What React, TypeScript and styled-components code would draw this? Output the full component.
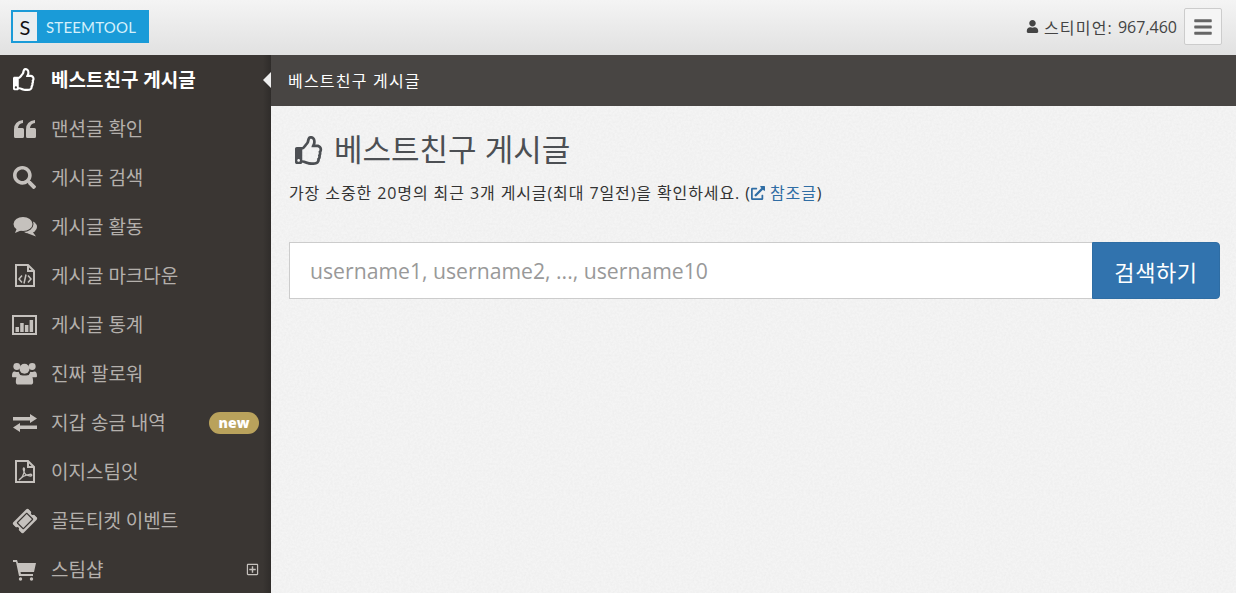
import React from "react";
import styled, { createGlobalStyle } from "styled-components";
import {
  FaBars,
  FaExternalLinkAlt,
  FaRegPlusSquare,
  FaRegThumbsUp,
  FaSearch,
  FaTicketAlt,
  FaUser,
} from "react-icons/fa";

const noise =
  "data:image/svg+xml,%3Csvg xmlns='http://www.w3.org/2000/svg' width='240' height='240'%3E%3Cfilter id='n'%3E%3CfeTurbulence type='fractalNoise' baseFrequency='0.45' numOctaves='2' stitchTiles='stitch'/%3E%3CfeColorMatrix values='0 0 0 0 0.45 0 0 0 0 0.45 0 0 0 0 0.45 0.18 0 0 0 -0.06'/%3E%3C/filter%3E%3Crect width='240' height='240' filter='url(%23n)'/%3E%3C/svg%3E";

const GlobalStyle = createGlobalStyle`
  html, body {
    margin: 0;
    padding: 0;
    height: 100%;
    overflow: hidden;
  }
  body {
    font-family: "Open Sans", "Noto Sans CJK KR", sans-serif;
    background: #f2f2f2;
  }
  * {
    box-sizing: border-box;
  }
`;

const Page = styled.div`
  display: flex;
  flex-direction: column;
  height: 593px;
  overflow: hidden;
`;

const Header = styled.header`
  display: flex;
  align-items: center;
  justify-content: space-between;
  flex: 0 0 55px;
  padding: 0 14px 2px 11px;
  background: linear-gradient(to bottom, #f4f4f4, #e1e1e1);
`;

const Logo = styled.div`
  display: flex;
  align-items: center;
  width: 138px;
  height: 33px;
  padding: 2px;
  background: #1a9bd8;
`;

const LogoMark = styled.span`
  display: flex;
  align-items: center;
  justify-content: center;
  width: 24px;
  height: 29px;
  margin-right: 9px;
  background: #e9eef0;
  color: #111;
  font-family: "Lato", sans-serif;
  font-size: 20px;
`;

const LogoText = styled.span`
  color: #d4f0fb;
  font-family: "Lato", sans-serif;
  font-size: 15px;
  letter-spacing: 0.2px;
`;

const HeaderRight = styled.div`
  display: flex;
  align-items: center;
`;

const Points = styled.span`
  display: flex;
  align-items: center;
  gap: 5px;
  margin-right: 7px;
  color: #444;
  font-size: 16px;
`;

const PointsLabel = styled.span`
  letter-spacing: 1.2px;
`;

const MenuButton = styled.button`
  display: flex;
  align-items: center;
  justify-content: center;
  width: 38px;
  height: 37px;
  padding: 0;
  border: 1px solid #ccc;
  border-radius: 2px;
  background: #f5f5f5;
  color: #666;
  font-size: 20px;
`;

const Body = styled.div`
  display: flex;
  flex: 1;
  min-height: 0;
`;

const Sidebar = styled.nav`
  flex: 0 0 271px;
  background: linear-gradient(to right, #3a3633 97%, #2f2c2a);
`;

const MenuItem = styled.a<{ $active?: boolean }>`
  position: relative;
  display: flex;
  align-items: center;
  height: 49px;
  padding: 0 12px;
  color: ${(p) => (p.$active ? "#fff" : "#b4b0ac")};
  font-size: 19px;
  font-weight: ${(p) => (p.$active ? 700 : 400)};
`;

const MenuIcon = styled.span<{ $active?: boolean }>`
  display: flex;
  justify-content: center;
  flex: 0 0 25px;
  margin-right: 14px;
  color: ${(p) => (p.$active ? "#fff" : "#c5c1bd")};
  font-size: 23px;
`;

const MenuLabel = styled.span`
  flex: 1;
  padding-bottom: 2px;
`;

const Tilted = styled.span`
  display: flex;
  font-size: 22px;
  transform: rotate(-45deg);
`;

const NewBadge = styled.span`
  display: flex;
  align-items: center;
  justify-content: center;
  width: 50px;
  height: 22px;
  border-radius: 11px;
  background: #b9a25c;
  color: #fff;
  font-size: 14px;
  font-weight: 800;
`;

const Expand = styled.span`
  display: flex;
  color: #c5c1bd;
  font-size: 13px;
`;

const ActiveArrow = styled.span`
  position: absolute;
  right: 0;
  top: 17px;
  width: 0;
  height: 0;
  border-style: solid;
  border-width: 8px 8px 8px 0;
  border-color: transparent #eee transparent transparent;
`;

const Main = styled.main`
  flex: 1;
  min-width: 0;
  background: #f4f4f4 url("${noise}");
`;

const Crumbs = styled.div`
  display: flex;
  align-items: center;
  height: 51px;
  padding: 0 0 2px 17px;
  background: #484543;
  color: #fff;
  font-size: 16px;
  letter-spacing: 1.2px;
`;

const Content = styled.section`
  padding: 24px 16px 0 18px;
`;

const Title = styled.h1`
  display: flex;
  align-items: center;
  gap: 10px;
  height: 40px;
  margin: 0 0 12px;
  padding-left: 6px;
  color: #4c4f53;
  font-size: 31px;
  font-weight: 400;
  line-height: 40px;
`;

const TitleText = styled.span`
  padding-bottom: 2px;
`;

const Subtitle = styled.p`
  margin: 0 0 38px;
  color: #333;
  font-size: 16px;
  letter-spacing: 0.9px;
  line-height: 22px;
`;

const Reference = styled.a`
  color: #2f6da4;
  svg {
    font-size: 14px;
    vertical-align: -1px;
  }
`;

const SearchRow = styled.form`
  display: flex;
  height: 57px;
`;

const SearchInput = styled.input`
  flex: 1;
  min-width: 0;
  padding: 0 20px;
  border: 1px solid #ccc;
  border-right: 0;
  background: #fff;
  font-family: inherit;
  font-size: 21.2px;
  &::placeholder {
    color: #999;
    opacity: 1;
  }
`;

const SearchButton = styled.button`
  flex: 0 0 128px;
  border: 1px solid #2e6da4;
  border-radius: 0 4px 4px 0;
  background: #3173ae;
  color: #fff;
  font-family: inherit;
  font-size: 22px;
  letter-spacing: 0.6px;
`;

const quoteMark =
  "M0 9.5Q0 1 9 0V3Q4.5 3.500 4 8H8.500A1.500 1.500 0 0 1 10 9.500V16.500A1.500 1.500 0 0 1 8.500 18H1.500A1.500 1.500 0 0 1 0 16.500Z";

const QuoteIcon = () => (
  <svg width="22" height="18" viewBox="0 0 22 18" fill="currentColor">
    <path d={quoteMark} />
    <path d={quoteMark} transform="translate(12 0)" />
  </svg>
);

const CommentsIcon = () => (
  <svg width="24" height="20" viewBox="0 0 24 20" fill="currentColor">
    <ellipse cx="16" cy="10" rx="8" ry="6.500" />
    <path d="M19 14l4 5.500-8-3z" />
    <ellipse cx="10" cy="7" rx="10.500" ry="8" fill="#3a3633" />
    <ellipse cx="10" cy="7" rx="9.500" ry="7" />
    <path d="M4 11l-2 5 7-3z" />
  </svg>
);

const FileOutline = () => (
  <>
    <path d="M1 1h12l6 6v15H1z" />
    <path d="M13 1v6h6" />
  </>
);

const FileCodeIcon = () => (
  <svg width="20" height="23" viewBox="0 0 20 23" fill="none" stroke="currentColor" strokeWidth="2">
    <FileOutline />
    <path d="M7 11.500l-3 3.500 3 3.500M13 11.500l3 3.500-3 3.500M11 10.500l-2 9" strokeWidth="1.500" />
  </svg>
);

const FilePdfIcon = () => (
  <svg width="20" height="23" viewBox="0 0 20 23" fill="none" stroke="currentColor" strokeWidth="2">
    <FileOutline />
    <path
      d="M4 20c3-2 5-6 5.500-10.500 0-2-1.500-2-1.200 0 .7 4.500 3.500 6.500 7.200 6.500 2 0 1.500-2-.7-1.700-4 .5-8 2.200-10.800 5.700z"
      strokeWidth="1.300"
    />
  </svg>
);

const ChartIcon = () => (
  <svg width="25" height="20" viewBox="0 0 25 20" fill="currentColor">
    <rect x="1" y="1" width="23" height="18" fill="none" stroke="currentColor" strokeWidth="2" />
    <rect x="3.500" y="12" width="3.500" height="5" />
    <rect x="8.200" y="8" width="3.500" height="9" />
    <rect x="12.900" y="10" width="3.500" height="7" />
    <rect x="17.600" y="5" width="3.500" height="12" />
  </svg>
);

const UsersIcon = () => (
  <svg width="25" height="23" viewBox="0 0 26 23" fill="currentColor">
    <circle cx="5" cy="4.200" r="3.600" />
    <circle cx="21" cy="4.200" r="3.600" />
    <circle cx="13" cy="6.500" r="5.200" />
    <path d="M0 14c0-3 1-5 3-4.500 1.500.6 3 .7 4 .3.500 2 1 2.500 1.500 3-1.500.6-2.500 1.500-3 2.500H1.500C.5 15.500 0 15 0 14z" />
    <path d="M26 14c0-3-1-5-3-4.500-1.500.6-3 .7-4 .3-.5 2-1 2.500-1.500 3 1.500.6 2.500 1.500 3 2.500h4c1 0 1.500-.5 1.500-1.300z" />
    <path d="M7.500 12.500c2 1.500 9 1.500 11 0 2.500.2 3.500 4 3.500 8 0 1.500-1 2.500-2.500 2.500h-13C5 23 4 22 4 20.500c0-4 1-7.800 3.500-8z" />
  </svg>
);

const ExchangeIcon = () => (
  <svg width="24" height="18" viewBox="0 0 24 18" fill="currentColor">
    <path d="M0 3h17V0l7 4.500L17 9V6.500H0z" />
    <path d="M24 11.500H7V9l-7 4.500L7 18v-3h17z" />
  </svg>
);

const CartIcon = () => (
  <svg width="23" height="22" viewBox="0 0 23 22" fill="currentColor">
    <path d="M0 1h4l1 3h18l-2 9H7.500l.4 2H20v2H6L3 3H0z" />
    <circle cx="7.500" cy="20" r="1.700" />
    <circle cx="18.500" cy="20" r="1.700" />
  </svg>
);

const menu = [
  { label: "베스트친구 게시글", icon: <FaRegThumbsUp />, active: true },
  { label: "맨션글 확인", icon: <QuoteIcon /> },
  { label: "게시글 검색", icon: <FaSearch /> },
  { label: "게시글 활동", icon: <CommentsIcon /> },
  { label: "게시글 마크다운", icon: <FileCodeIcon /> },
  { label: "게시글 통계", icon: <ChartIcon /> },
  { label: "진짜 팔로워", icon: <UsersIcon /> },
  { label: "지갑 송금 내역", icon: <ExchangeIcon />, badge: true },
  { label: "이지스팀잇", icon: <FilePdfIcon /> },
  {
    label: "골든티켓 이벤트",
    icon: (
      <Tilted>
        <FaTicketAlt />
      </Tilted>
    ),
  },
  { label: "스팀샵", icon: <CartIcon />, expand: true },
];

const App: React.FC = () => {
  return (
    <Page>
      <GlobalStyle />
      <Header>
        <Logo>
          <LogoMark>S</LogoMark>
          <LogoText>STEEMTOOL</LogoText>
        </Logo>
        <HeaderRight>
          <Points>
            <FaUser size={13} />
            <PointsLabel>스티미언:</PointsLabel>
            967,460
          </Points>
          <MenuButton type="button">
            <FaBars />
          </MenuButton>
        </HeaderRight>
      </Header>
      <Body>
        <Sidebar>
          {menu.map((item) => (
            <MenuItem key={item.label} $active={item.active}>
              <MenuIcon $active={item.active}>{item.icon}</MenuIcon>
              <MenuLabel>{item.label}</MenuLabel>
              {item.badge && <NewBadge>new</NewBadge>}
              {item.expand && (
                <Expand>
                  <FaRegPlusSquare />
                </Expand>
              )}
              {item.active && <ActiveArrow />}
            </MenuItem>
          ))}
        </Sidebar>
        <Main>
          <Crumbs>베스트친구 게시글</Crumbs>
          <Content>
            <Title>
              <FaRegThumbsUp size={29} />
              <TitleText>베스트친구 게시글</TitleText>
            </Title>
            <Subtitle>
              가장 소중한 20명의 최근 3개 게시글(최대 7일전)을 확인하세요. (
              <Reference>
                <FaExternalLinkAlt /> 참조글
              </Reference>
              )
            </Subtitle>
            <SearchRow>
              <SearchInput placeholder="username1, username2, ..., username10" />
              <SearchButton type="button">검색하기</SearchButton>
            </SearchRow>
          </Content>
        </Main>
      </Body>
    </Page>
  );
};

export default App;
